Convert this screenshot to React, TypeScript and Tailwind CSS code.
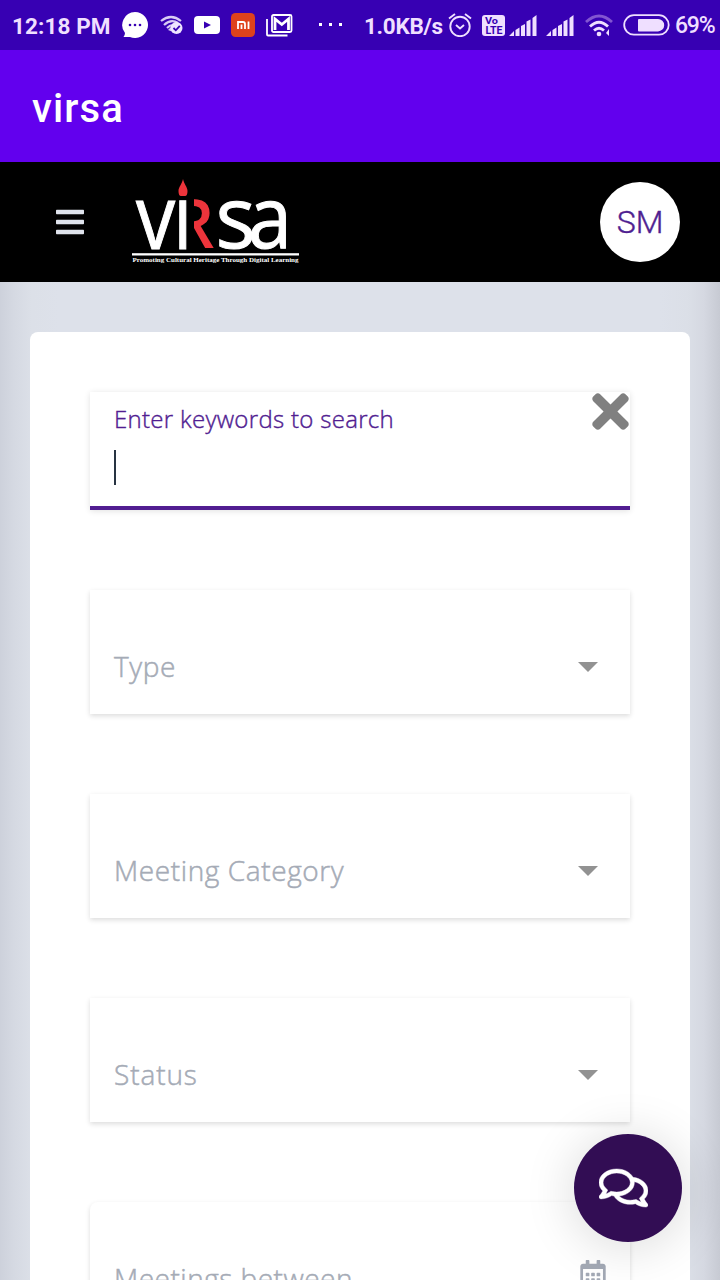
import type { ReactNode } from 'react';
import { FaBars, FaRegCalendarAlt, FaRegComments, FaTimes } from 'react-icons/fa';

export default function App() {
  return (
    <div className="relative flex h-[1280px] w-[720px] flex-col overflow-hidden bg-[#dde1ea]">
      <StatusBar />
      <div className="flex h-[112px] shrink-0 items-center bg-[#6200ee] pl-8 pt-1.5">
        <h1 className="font-[Roboto,sans-serif] text-[40px] font-medium leading-none tracking-[1.1px] text-white">virsa</h1>
      </div>
      <SiteHeader />
      <main className="flex-1 bg-[linear-gradient(90deg,#cdd1db_0,#d5d9e2_14px,#dce0e8_32px,#dde1ea_60px,#dde1ea_660px,#dbdfe7_688px,#d5d8e1_704px,#c7cad3_720px)] px-[30px] pt-[50px]">
        <div className="flex h-full flex-col gap-20 rounded-t-lg bg-white px-[60px] pt-[60px]">
          <SearchField />
          <SelectField label="Type" textClass="tracking-[0.6px]" />
          <SelectField label="Meeting Category" textClass="tracking-[0.6px]" />
          <SelectField label="Status" textClass="tracking-[0.9px]" />
          <Field className="rounded-t-lg" textClass="tracking-[0.5px]" label="Meetings between">
            <FaRegCalendarAlt className="mb-[9px] h-[29px] w-[26px] text-[#a3a9b5]" />
          </Field>
        </div>
      </main>
      <button
        type="button"
        aria-label="Chat"
        className="absolute left-[574px] top-[1134px] flex h-[108px] w-[108px] items-center justify-center rounded-full bg-[#320d54] text-white shadow-[0_4px_48px_4px_rgba(0,0,0,0.13)]"
      >
        <FaRegComments className="mr-[9px] h-[44px] w-[49px] stroke-current [stroke-width:5]" />
      </button>
    </div>
  );
}

function StatusBar() {
  return (
    <div className="flex h-[50px] shrink-0 items-center bg-[#3700b3] font-[Roboto,sans-serif] text-[22.5px] font-bold text-[#efdfff]">
      <span className="ml-3 w-[110px] whitespace-nowrap pt-[3px] tracking-[0.1px]">12:18 PM</span>
      <svg className="h-[26px] w-[26px]" viewBox="0 0 26 26">
        <path d="M13 0a13 13 0 1 1-5 25H1.500q1.500-2 1.500-4A13 13 0 0 1 13 0z" fill="#fff" />
        <g fill="#3700b3"><circle cx="8" cy="13" r="1.300" /><circle cx="13" cy="13" r="1.300" /><circle cx="18" cy="13" r="1.300" /></g>
      </svg>
      <svg className="ml-[12px] h-[20px] w-[23px]" viewBox="0 0 23 20" fill="none" stroke="#d9cbf4" strokeWidth="2.200">
        <path d="M1 6Q11-2 21 6M4 10Q11 3.500 18 8M7 13q3-3 6-3" />
        <path d="m8 15 3-3 2 5z" fill="#d9cbf4" stroke="none" />
        <circle cx="16.500" cy="13" r="6" fill="#efe4ff" stroke="none" />
        <path d="m13.500 13 2.300 2.300 4-4.500" stroke="#3700b3" strokeWidth="1.800" />
      </svg>
      <svg className="ml-[11px] h-[18px] w-[26px]" viewBox="0 0 26 18">
        <rect width="26" height="18" rx="4" fill="#fff" />
        <path d="m10 5.500 7 3.500-7 3.500z" fill="#3700b3" />
      </svg>
      <svg className="ml-[11px] h-[24px] w-[24px]" viewBox="0 0 24 24">
        <rect width="24" height="24" rx="4.500" fill="#df421c" />
        <path d="M7 16V9h5q2 0 2 2v5M10.500 11.500V16M17.500 8.500V16" fill="none" stroke="#fff" strokeWidth="1.800" />
      </svg>
      <svg className="ml-[11px] h-[23px] w-[27px]" viewBox="0 0 27 23" fill="none" stroke="#fff">
        <path d="M1 5v15.500q0 1 1 1h19.500" strokeWidth="1.800" />
        <rect x="6" y="1" width="19.500" height="17" rx="1.500" strokeWidth="1.800" />
        <path d="M9 16V5l6.800 5.500L22.500 5v11" strokeWidth="2.800" />
      </svg>
      <svg className="ml-[26px] h-[4px] w-[24px]" viewBox="0 0 24 4" fill="#fff">
        <rect width="3" height="3" /><rect x="10" width="3" height="3" /><rect x="20" width="3" height="3" />
      </svg>
      <span className="ml-[21px] w-[84px] whitespace-nowrap pt-[3px] tracking-[-0.3px]">1.0KB/s</span>
      <svg className="h-[24px] w-[24px]" viewBox="0 0 24 24" fill="none" stroke="currentColor" strokeWidth="1.900">
        <circle cx="12" cy="13.500" r="9.700" />
        <path d="m8 12 4 3.500 4-3.500M1 5.500l6-4.500M23 5.500l-6-4.500" />
      </svg>
      <svg className="ml-[10px] h-[21px] w-[23px]" viewBox="0 0 23 21">
        <rect width="23" height="21" rx="3" fill="#efdfff" />
        <text x="3" y="9" fontSize="9.500" textLength="13" lengthAdjust="spacingAndGlyphs" fontWeight="700" fontFamily="Roboto" fill="#3700b3">Vo</text>
        <text x="3.500" y="18.500" fontSize="10" textLength="17" lengthAdjust="spacingAndGlyphs" fontWeight="700" fontFamily="Roboto" fill="#3700b3">LTE</text>
      </svg>
      <SignalBars className="ml-[4px]" />
      <SignalBars className="ml-[9px]" />
      <svg className="ml-[11px] mt-0.5 h-[24px] w-[28px]" viewBox="0 0 28 24" fill="none" stroke="currentColor" strokeWidth="2.800">
        <path d="M1 8Q14-4 27 8" stroke="#8255d1" />
        <path d="M5 12.500q9-8.500 18 0M9 16.500q5-4.500 10 0" />
        <circle cx="14" cy="20" r="2.300" fill="currentColor" stroke="none" />
        <path d="m24 15v7l-3-3z" fill="currentColor" stroke="none" />
      </svg>
      <svg className="ml-[10px] h-[22px] w-[47px]" viewBox="0 0 47 22">
        <rect x="1.200" y="1.200" width="44.500" height="19.500" rx="9.700" fill="none" stroke="currentColor" strokeWidth="1.800" />
        <path d="M16 5h19a6.200 6.200 0 0 1 0 12.400H16q-1 0-1-1V6q0-1 1-1z" fill="currentColor" />
      </svg>
      <span className="ml-[5px] whitespace-nowrap pt-[3px] text-[23px] font-medium tracking-[-1.2px]">69%</span>
    </div>
  );
}

function SignalBars({ className }: { className: string }) {
  return (
    <svg className={`h-[21px] w-[28px] ${className}`} viewBox="0 0 28 21" fill="currentColor">
      <path d="M0 21l5-5v5zM6.500 15l4-2.500V21h-4zM12 11l4-2v12h-4zM17.500 6.500l4-2V21h-4zM23.500 3l4-3v21h-4z" />
    </svg>
  );
}

function SiteHeader() {
  return (
    <header className="flex h-[120px] shrink-0 items-center bg-black pl-[56px] pr-10">
      <FaBars className="h-[32px] w-[28px] text-[#dfe3ec]" />
      <VirsaLogo />
      <div className="ml-auto flex h-20 w-20 items-center justify-center rounded-full bg-white font-[Roboto,sans-serif] text-[32px] font-light text-[#4f1f91] [-webkit-text-stroke:0.4px]">
        SM
      </div>
    </header>
  );
}

function VirsaLogo() {
  return (
    <svg className="ml-[47px] h-[90px] w-[170px] overflow-visible" viewBox="0 0 170 90">
      <defs>
        <clipPath id="rBowl"><rect x="63" y="15" width="32" height="60" /></clipPath>
      </defs>
      <path d="M52 2c1 5 4.500 8 4.500 12q0 5-2.500 5h-4q-2.500 0-2.500-5c0-4 3.500-7 4.500-12z" fill="#ed343b" />
      <g fill="#fff" stroke="#fff" strokeWidth="1" fontFamily="Open Sans, Noto Sans, sans-serif">
        <text transform="translate(5 72) scale(.87 1)" fontSize="90">v</text>
        <text transform="translate(42.200 72) scale(.84 1)" fontSize="90">ı</text>
        <text transform="translate(84.500 71) scale(.98 1)" fontSize="86">s</text>
        <text transform="translate(117 71) scale(.92 1)" fontSize="86">a</text>
      </g>
      <g clipPath="url(#rBowl)">
        <text transform="translate(42 71) scale(.95 1)" fontSize="68" fontFamily="Open Sans, Noto Sans, sans-serif" fontWeight="600" fill="#ed343b">R</text>
      </g>
      <rect x="1" y="76.200" width="167" height="2.300" fill="#fff" />
      <text x="1.500" y="85.200" fontSize="7" textLength="166" lengthAdjust="spacingAndGlyphs" fontFamily="Liberation Serif, serif" fontWeight="700" fill="#fff">
        Promoting Cultural Heritage Through Digital Learning
      </text>
    </svg>
  );
}

function SearchField() {
  return (
    <div className="relative h-[118px] shrink-0 border-b-4 border-[#511d91] px-6 pt-[10px] shadow-[0_1px_6px_rgba(0,0,0,0.12)]">
      <p className="font-['Open_Sans',sans-serif] text-[24px] font-light leading-[34px] tracking-[0.3px] text-[#511d91] [-webkit-text-stroke:0.4px]">
        Enter keywords to search
      </p>
      <div className="mt-[14px] h-[35px] w-[2px] bg-[#283442]" />
      <FaTimes className="absolute right-[1.5px] top-[-7px] h-[53px] w-[37px] text-[#808080]" />
    </div>
  );
}

function SelectField({ label, textClass }: { label: string; textClass: string }) {
  return (
    <Field label={label} textClass={textClass}>
      <svg className="mr-2 h-[10px] w-[20px]" viewBox="0 0 20 10">
        <path d="M0 0h20L10 10z" fill="#929292" />
      </svg>
    </Field>
  );
}

function Field({ label, textClass, className = '', children }: {
  label: string; textClass: string; className?: string; children: ReactNode;
}) {
  return (
    <div className={`flex h-[124px] shrink-0 items-center justify-between px-6 pt-[30px] shadow-[0_2px_5px_rgba(0,0,0,0.14)] ${className}`}>
      <span className={`pb-[2px] font-['Open_Sans',sans-serif] text-[28px] font-light text-[#a5abb6] [-webkit-text-stroke:0.5px] ${textClass}`}>{label}</span>
      {children}
    </div>
  );
}
